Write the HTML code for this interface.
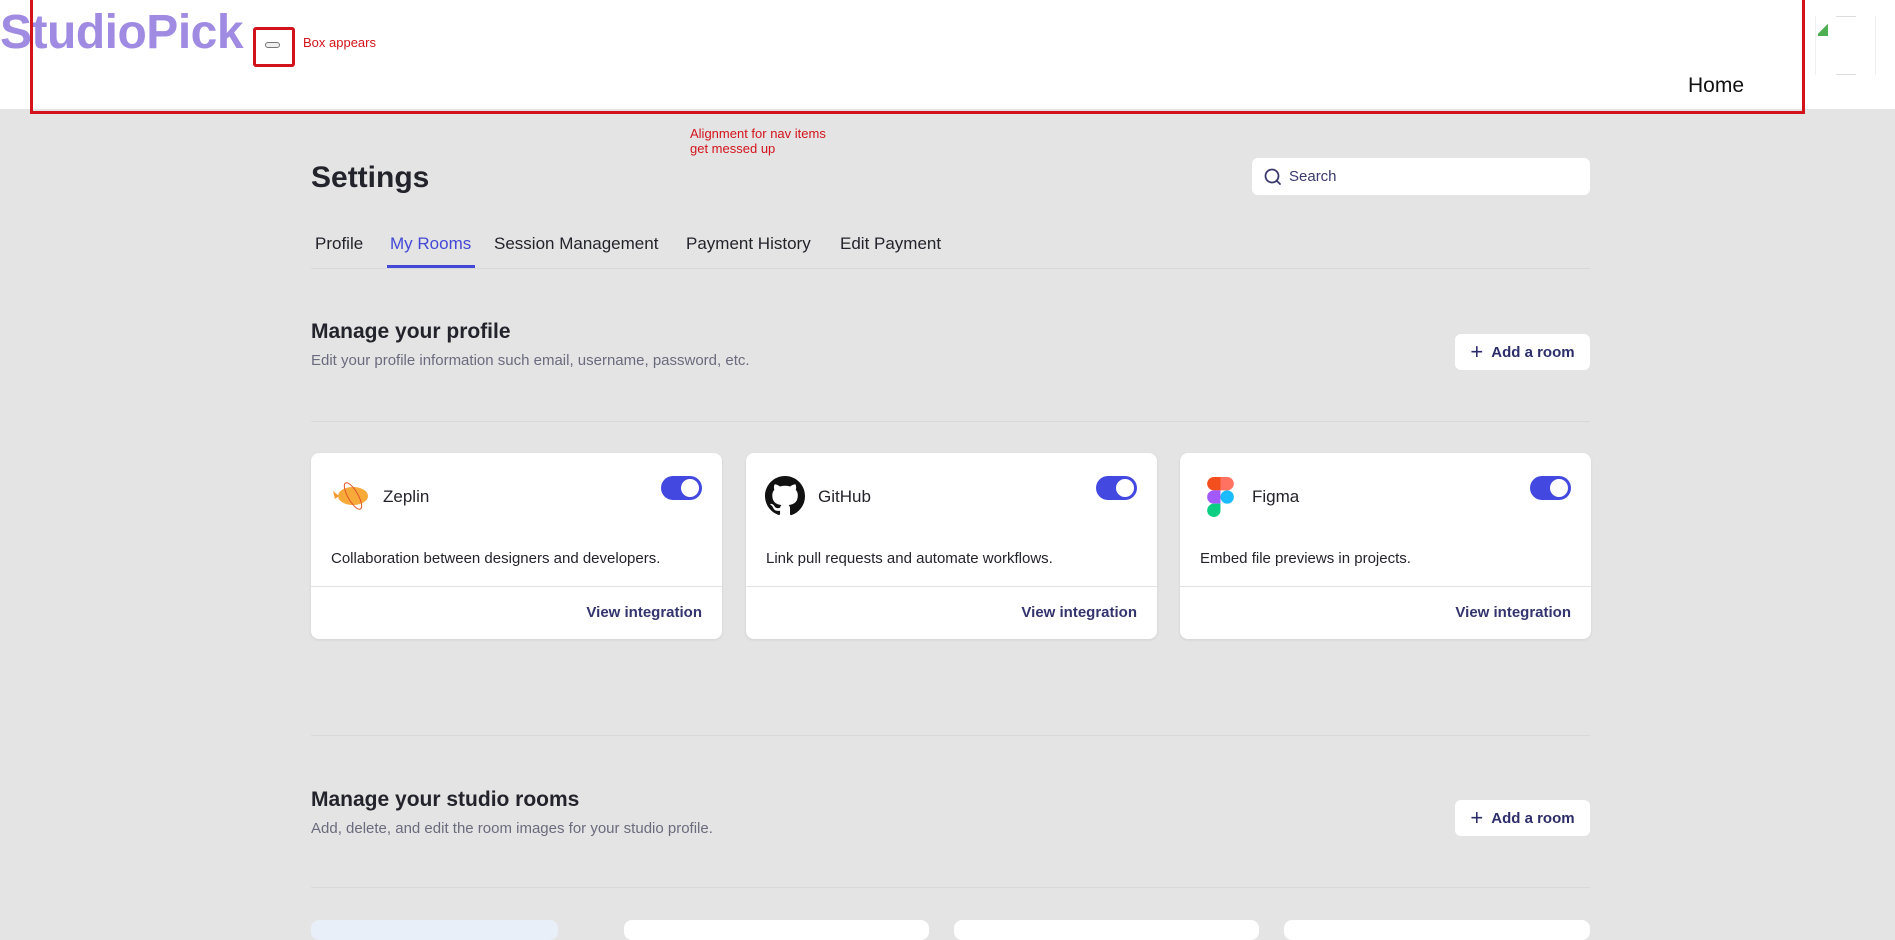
<!DOCTYPE html>
<html><head><meta charset="utf-8"><style>
*{margin:0;padding:0;box-sizing:border-box}
body{width:1895px;height:931px;overflow:hidden;background:#e4e4e4;font-family:"Liberation Sans",sans-serif;position:relative;color:#23232b}
.a{position:absolute}
.hdr{left:0;top:0;width:1895px;height:109px;background:#fff}
.red{border:3px solid #d3131b}
.note{color:#d3131b;font-size:13px;line-height:15px}
.tab{top:234px;font-size:17px;color:#23232b}
.line{height:1px;background:#d9d9dc;left:311px;width:1279px}
.h2{font-size:21px;font-weight:bold;color:#23232b}
.sub{font-size:15px;color:#6b6b7e}
.btn{background:#fff;border-radius:6px;width:135px;height:36px;font-size:15px;color:#2d2d6b;font-weight:bold;display:flex;align-items:center;justify-content:center;gap:8px}
.card{top:453px;width:411px;height:186px;background:#fff;border-radius:8px;box-shadow:0 1px 3px rgba(0,0,0,.08)}
.card .t{position:absolute;left:72px;top:34px;font-size:17px;color:#23232b}
.card .d{position:absolute;left:20px;top:97px;font-size:15px;color:#23232b}
.card .dv{position:absolute;left:0;right:0;top:133px;height:1px;background:#e3e3e6}
.card .v{position:absolute;right:20px;top:151px;font-size:15px;color:#34346e;font-weight:bold}
.tg{position:absolute;right:20px;top:23px;width:41px;height:24px;border-radius:12px;background:#4348e0}
.tg:after{content:"";position:absolute;right:3px;top:3px;width:18px;height:18px;border-radius:50%;background:#fff}
</style></head><body>
<div class="a hdr"></div>
<div class="a" style="left:0;top:5px;font-size:48px;font-weight:bold;color:#a08be2;letter-spacing:-0.5px">StudioPick</div>
<div class="a red" style="left:30px;top:-3px;width:1775px;height:117px;border-width:3px"></div>
<div class="a red" style="left:253px;top:27px;width:42px;height:40px;border-radius:3px"></div>
<div class="a" style="left:265px;top:42px;width:15px;height:6px;border:1px solid #777;border-radius:3px;background:#eee"></div>
<div class="a note" style="left:303px;top:35px">Box appears</div>
<div class="a" style="left:1688px;top:74px;font-size:21px;color:#111">Home</div>
<div class="a" style="left:1815px;top:16px;width:61px;height:59px;border-left:1px solid #eee;border-right:1px solid #eee"></div>
<div class="a" style="left:1836px;top:16px;width:20px;height:1px;background:#ddd"></div>
<div class="a" style="left:1836px;top:74px;width:20px;height:1px;background:#ddd"></div>
<div class="a" style="left:1818px;top:24px;width:10px;height:12px;background:linear-gradient(135deg,transparent 45%,#4caf50 45%)"></div>
<div class="a note" style="left:690px;top:126px">Alignment for nav items<br>get messed up</div>

<div class="a" style="left:311px;top:161px;font-size:30px;font-weight:bold;color:#23232b">Settings</div>
<div class="a" style="left:1252px;top:158px;width:338px;height:37px;background:#fff;border-radius:6px"></div>
<svg class="a" style="left:1263px;top:167px" width="20" height="20" viewBox="0 0 20 20"><circle cx="9" cy="9" r="6.5" fill="none" stroke="#3a3a6e" stroke-width="1.8"/><path d="M13.5 13.5L17 17" stroke="#3a3a6e" stroke-width="1.8" stroke-linecap="round"/></svg>
<div class="a" style="left:1289px;top:168px;font-size:15px;color:#3a3a6e">Search</div>

<div class="a tab" style="left:315px">Profile</div>
<div class="a tab" style="left:390px;color:#4348d6">My Rooms</div>
<div class="a tab" style="left:494px">Session Management</div>
<div class="a tab" style="left:686px">Payment History</div>
<div class="a tab" style="left:840px">Edit Payment</div>
<div class="a line" style="top:268px"></div>
<div class="a" style="left:387px;top:265px;width:88px;height:3px;background:#4348d6"></div>

<div class="a h2" style="left:311px;top:320px">Manage your profile</div>
<div class="a sub" style="left:311px;top:352px">Edit your profile information such email, username, password, etc.</div>
<div class="a btn" style="left:1455px;top:334px"><span style="font-size:22px;font-weight:normal">+</span>Add a room</div>
<div class="a line" style="top:421px"></div>

<div class="a card" style="left:311px">
<svg style="position:absolute;left:20px;top:25px" width="40" height="36" viewBox="0 0 40 36"><ellipse cx="22" cy="18" rx="15" ry="9" fill="#f7a93a"/><path d="M8 18L2 13 4 21z" fill="#f29a2e"/><ellipse cx="22" cy="18" rx="5" ry="15" fill="none" stroke="#e0542a" stroke-width="1" transform="rotate(-30 22 18)"/></svg>
<div class="t">Zeplin</div><div class="tg"></div>
<div class="d">Collaboration between designers and developers.</div>
<div class="dv"></div><div class="v">View integration</div></div>

<div class="a card" style="left:746px">
<svg style="position:absolute;left:19px;top:23px" width="40" height="40" viewBox="0 0 16 16"><path fill="#111" d="M8 0C3.58 0 0 3.58 0 8c0 3.54 2.290 6.53 5.47 7.59.4.07.55-.17.55-.38v-1.33c-2.230.48-2.700-1.070-2.700-1.070-.36-.92-.89-1.170-.89-1.170-.73-.5.06-.49.06-.49.8.06 1.230.83 1.230.83.72 1.230 1.880.87 2.340.67.07-.52.28-.87.51-1.070-1.780-.2-3.650-.89-3.650-3.950 0-.87.31-1.590.82-2.150-.08-.2-.36-1.020.08-2.120 0 0 .67-.21 2.200.82a7.600 7.600 0 0 1 4 0c1.530-1.040 2.200-.82 2.200-.82.44 1.100.16 1.920.08 2.120.51.56.82 1.270.82 2.150 0 3.070-1.870 3.750-3.650 3.950.29.25.54.73.54 1.480v2.200c0 .21.15.46.55.38A8 8 0 0 0 16 8c0-4.420-3.580-8-8-8z"/></svg>
<div class="t">GitHub</div><div class="tg"></div>
<div class="d">Link pull requests and automate workflows.</div>
<div class="dv"></div><div class="v">View integration</div></div>

<div class="a card" style="left:1180px">
<svg style="position:absolute;left:27px;top:24px" width="27" height="40" viewBox="0 0 26 39"><path d="M6.5 0H13V13H6.5A6.5 6.5 0 0 1 6.5 0z" fill="#f24e1e"/><path d="M13 0h6.5a6.5 6.5 0 0 1 0 13H13z" fill="#ff7262"/><path d="M6.5 13H13V26H6.5a6.5 6.5 0 0 1 0-13z" fill="#a259ff"/><circle cx="19.5" cy="19.5" r="6.5" fill="#1abcfe"/><path d="M6.5 26H13v6.5A6.5 6.5 0 1 1 6.5 26z" fill="#0acf83"/></svg>
<div class="t">Figma</div><div class="tg"></div>
<div class="d">Embed file previews in projects.</div>
<div class="dv"></div><div class="v">View integration</div></div>

<div class="a line" style="top:735px"></div>
<div class="a h2" style="left:311px;top:788px">Manage your studio rooms</div>
<div class="a sub" style="left:311px;top:820px">Add, delete, and edit the room images for your studio profile.</div>
<div class="a btn" style="left:1455px;top:800px"><span style="font-size:22px;font-weight:normal">+</span>Add a room</div>
<div class="a line" style="top:887px"></div>

<div class="a" style="left:311px;top:920px;width:247px;height:20px;background:#e9eff8;border-radius:8px"></div>
<div class="a" style="left:624px;top:920px;width:305px;height:20px;background:#fff;border-radius:8px"></div>
<div class="a" style="left:954px;top:920px;width:305px;height:20px;background:#fff;border-radius:8px"></div>
<div class="a" style="left:1284px;top:920px;width:306px;height:20px;background:#fff;border-radius:8px"></div>
</body></html>
